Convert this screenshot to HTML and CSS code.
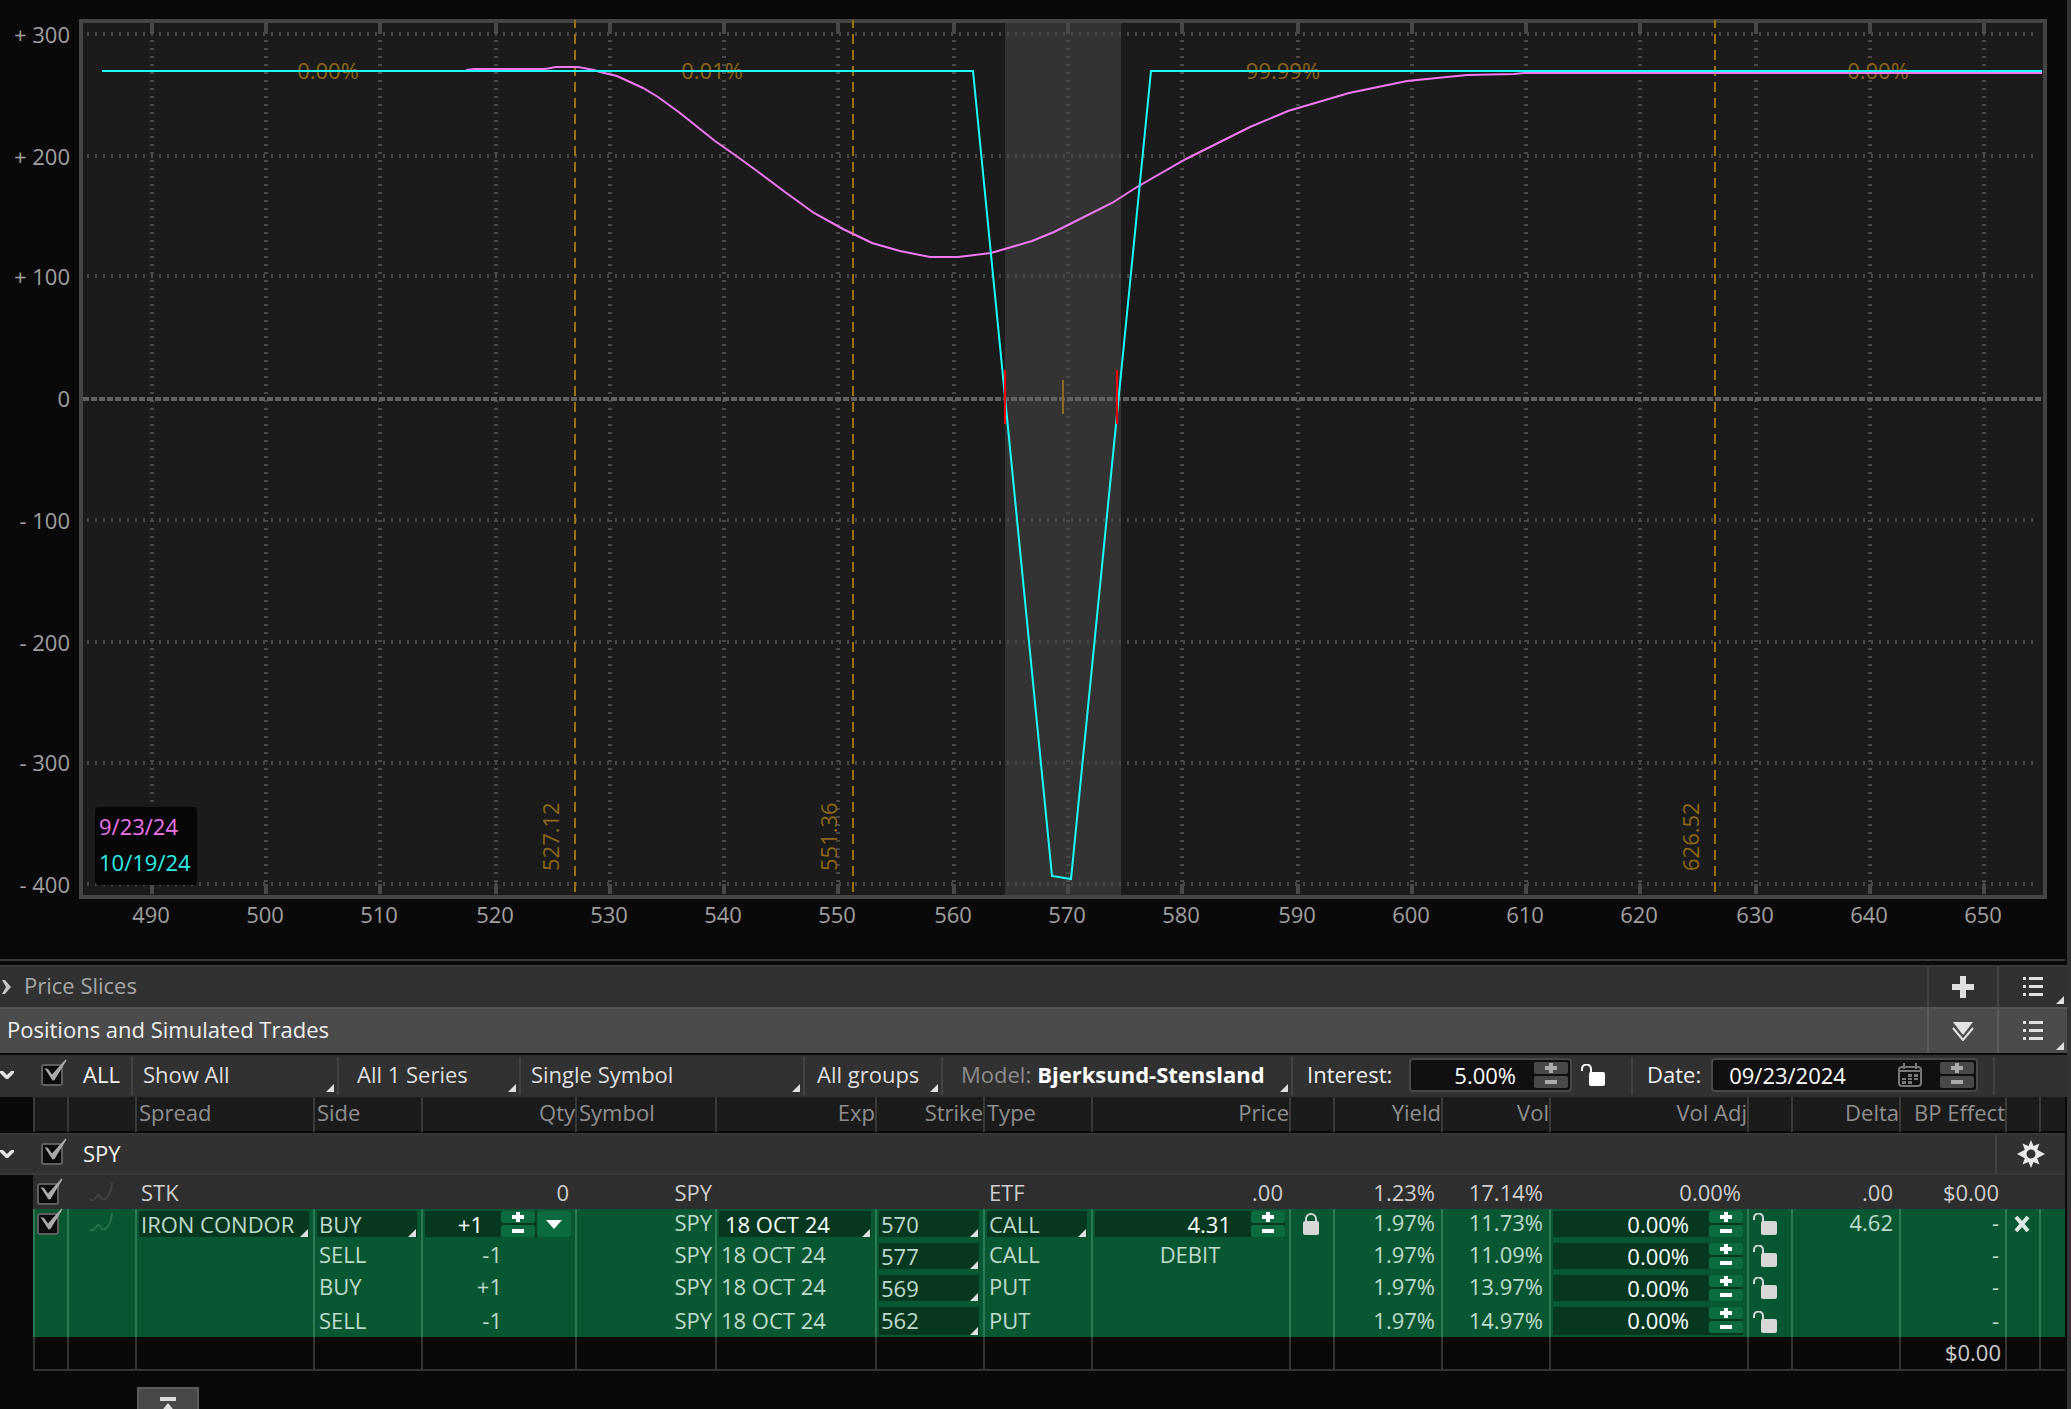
FILE: index.html
```html
<!DOCTYPE html>
<html lang="en">
<head>
    <meta charset="UTF-8">
    <meta name="viewport" content="width=device-width, initial-scale=1.0">
    <title>Risk Profile - SPY</title>
    <link rel="stylesheet" href="styles.css">
</head>
<body>
    <!-- icons -->
    <svg class="sprite" aria-hidden="true">
        <symbol id="i-check" viewBox="0 0 26 28"><path d="M3.500 10 L7 11 L11 16.500 L24.500 1.500 L25.500 2.500 L13.500 22 L11.500 22.500 Z" fill="#aaa"/></symbol>
        <symbol id="i-curve" viewBox="0 0 24 20"><path d="M1 17 C4 20 6 17 8 14 C10 11 11 15 13 17 C16 19 22 14 23 1" fill="none" stroke="currentColor" stroke-width="2"/></symbol>
        <symbol id="i-down" viewBox="0 0 14 10"><path d="M0 1 L3 1 L7 5 L11 1 L14 1 L14 3 L8 9 L6 9 L0 3 Z" fill="#e4e4e4"/></symbol>
        <symbol id="i-right" viewBox="0 0 12 16"><path d="M2 1 L5 1 L11 8 L5 15 L2 15 L6 8 Z" fill="#c4c4c4"/></symbol>
        <symbol id="i-plus" viewBox="0 0 22 22"><path d="M8 0h6v8h8v6h-8v8h-6v-8h-8v-6h8z" fill="#e0e0e0"/></symbol>
        <symbol id="i-list" viewBox="0 0 20 20"><path d="M0 0h3v3h-3z M6 0h14v3h-14z M0 8h3v3h-3z M6 8h14v3h-14z M0 16h3v3h-3z M6 16h14v3h-14z" fill="#e0e0e0"/></symbol>
        <symbol id="i-double" viewBox="0 0 22 20"><path d="M1 1h20l-10 13z" fill="#e4e4e4"/><path d="M1 7l10 12 10-12" fill="none" stroke="#e4e4e4" stroke-width="2"/></symbol>
        <symbol id="i-gear" viewBox="0 0 28 28"><path d="M14 0l2.500 6 6-2.500-2.300 6.200L28 14l-7.800 4.300L22.500 24.500l-6-2.500L14 28l-2.500-6-6 2.500 2.300-6.200L0 14l7.800-4.300L5.500 3.500l6 2.500zM14 9.500a4.500 4.500 0 1 0 0 9a4.500 4.500 0 1 0 0-9z" fill="#e8e8e8" fill-rule="evenodd"/></symbol>
        <symbol id="i-lock" viewBox="0 0 16 22"><rect x="0" y="8" width="16" height="14" rx="2" fill="currentColor"/><path d="M3 9V6a5 5 0 0 1 10 0V9" fill="none" stroke="currentColor" stroke-width="2"/></symbol>
        <symbol id="i-unlock" viewBox="0 0 24 22"><rect x="8" y="8" width="16" height="14" rx="2" fill="currentColor"/><path d="M1 7V5a4 4 0 0 1 9 0V9" fill="none" stroke="currentColor" stroke-width="2"/></symbol>
        <symbol id="i-close" viewBox="0 0 16 16"><path d="M2 1l12 14M14 1L2 15" stroke="#e0e8e4" stroke-width="4"/></symbol>
        <symbol id="i-cal" viewBox="0 0 24 24"><rect x="1" y="4" width="22" height="19" rx="3" fill="none" stroke="#777" stroke-width="2"/><path d="M2 8h20M6 0v6M18 0v6" stroke="#777" stroke-width="2"/><path d="M10 11h4v3h-4zM16 11h4v3h-4zM4 15h4v2h-4zM10 15h4v2h-4zM16 15h4v2h-4zM4 18h4v3h-4zM10 18h4v3h-4z" fill="#777"/></symbol>
    </svg>

    <main class="app">
        <svg class="chart" viewBox="0 0 2067 959" role="img" aria-label="Profit and loss by price">
            <rect class="plot" x="81" y="21" width="1963" height="875"/>
            <rect class="range" x="1005" y="19" width="116" height="880"/>

            <g class="grid-h">
                <path d="M87 34H2038M87 156H2038M87 276H2038M87 520H2038M87 642H2038M87 763H2038M87 884H2038"/>
            </g>
            <g class="grid-v">
                <path d="M152 40V884M266 40V884M380 40V884M496 40V884M610 40V884M724 40V884M838 40V884M954 40V884M1068 40V884M1182 40V884M1298 40V884M1412 40V884M1526 40V884M1640 40V884M1756 40V884M1870 40V884M1984 40V884"/>
            </g>
            <path class="zero" d="M83 399H2042"/>
            <path class="ticks" d="M152 23V34M266 23V34M380 23V34M496 23V34M610 23V34M724 23V34M838 23V34M954 23V34M1068 23V34M1182 23V34M1298 23V34M1412 23V34M1526 23V34M1640 23V34M1756 23V34M1870 23V34M1984 23V34M152 884V894M266 884V894M380 884V894M496 884V894M610 884V894M724 884V894M838 884V894M954 884V894M1068 884V894M1182 884V894M1298 884V894M1412 884V894M1526 884V894M1640 884V894M1756 884V894M1870 884V894M1984 884V894"/>
            <rect class="frame" x="81" y="21" width="1964" height="876"/>

            <!-- price slices -->
            <path class="slice" d="M575 20V898M853 20V898M1715 20V898"/>
            <g class="slice-text">
                <text x="328" y="79" text-anchor="middle">0.00%</text>
                <text x="712" y="79" text-anchor="middle">0.01%</text>
                <text x="1283" y="79" text-anchor="middle">99.99%</text>
                <text x="1878" y="79" text-anchor="middle">0.00%</text>
                <text transform="translate(559 871) rotate(-90)">527.12</text>
                <text transform="translate(837 871) rotate(-90)">551.36</text>
                <text transform="translate(1699 871) rotate(-90)">626.52</text>
            </g>

            <!-- P/L today and at expiration -->
            <polyline class="today" points="466,70 475,69 545,69 556,67 578,67 594,70 600,72 617,76 643,88 658,97 680,113 700,129 715,141 735,155 757,171 785,192 814,213 843,229 872,243 900,251 930,257 958,257 991,253 1032,241 1054,232 1068,225 1112,203 1137,187 1186,159 1250,127 1288,111 1349,93 1407,81 1467,75 1514,74 1524,73 2042,73"/>
            <polyline class="expiration" points="102,71 973,71 1052,876 1071,879 1151,71 2042,71"/>
            <path class="breakeven" d="M1005 370V424M1117 370V424"/>
            <path class="current" d="M1063 380V414"/>

            <g class="axis axis-y">
                <text x="70" y="43">+ 300</text>
                <text x="70" y="165">+ 200</text>
                <text x="70" y="285">+ 100</text>
                <text x="70" y="407">0</text>
                <text x="70" y="529">- 100</text>
                <text x="70" y="651">- 200</text>
                <text x="70" y="771">- 300</text>
                <text x="70" y="893">- 400</text>
            </g>
            <g class="axis axis-x">
                <text x="151" y="923">490</text>
                <text x="265" y="923">500</text>
                <text x="379" y="923">510</text>
                <text x="495" y="923">520</text>
                <text x="609" y="923">530</text>
                <text x="723" y="923">540</text>
                <text x="837" y="923">550</text>
                <text x="953" y="923">560</text>
                <text x="1067" y="923">570</text>
                <text x="1181" y="923">580</text>
                <text x="1297" y="923">590</text>
                <text x="1411" y="923">600</text>
                <text x="1525" y="923">610</text>
                <text x="1639" y="923">620</text>
                <text x="1755" y="923">630</text>
                <text x="1869" y="923">640</text>
                <text x="1983" y="923">650</text>
            </g>

            <rect class="legend-box" x="95" y="807" width="102" height="78" rx="4"/>
            <text class="legend-today" x="99" y="835">9/23/24</text>
            <text class="legend-exp" x="99" y="871">10/19/24</text>
        </svg>

        <hr class="splitter">

        <section class="bar">
            <button class="toggle" aria-label="Expand"><svg width="12" height="16"><use href="#i-right"/></svg></button>
            <h2 class="bar-title">Price Slices</h2>
            <button class="bar-btn" aria-label="Add slice"><svg width="22" height="22"><use href="#i-plus"/></svg></button>
            <button class="bar-btn corner" aria-label="Menu"><svg width="20" height="20"><use href="#i-list"/></svg></button>
        </section>

        <section class="bar bar-active">
            <h2 class="bar-title">Positions and Simulated Trades</h2>
            <button class="bar-btn" aria-label="Collapse"><svg width="22" height="20"><use href="#i-double"/></svg></button>
            <button class="bar-btn corner" aria-label="Menu"><svg width="20" height="20"><use href="#i-list"/></svg></button>
        </section>

        <div class="toolbar">
            <div class="tool tool-all">
                <button class="toggle" aria-label="Collapse all"><svg width="14" height="10"><use href="#i-down"/></svg></button>
                <label class="check"><input type="checkbox" checked><svg><use href="#i-check"/></svg><span>ALL</span></label>
            </div>
            <div class="tool tool-show corner"><select aria-label="Show"><option>Show All</option></select></div>
            <div class="tool tool-series corner"><select aria-label="Series"><option>All 1 Series</option></select></div>
            <div class="tool tool-symbol corner"><select aria-label="Symbol"><option>Single Symbol</option></select></div>
            <div class="tool tool-groups corner"><select aria-label="Groups"><option>All groups</option></select></div>
            <div class="tool tool-model corner">
                <label for="model">Model:</label>
                <select id="model"><option>Bjerksund-Stensland</option></select>
            </div>
            <div class="tool tool-interest">
                <label for="interest">Interest:</label>
                <div class="field">
                    <input id="interest" type="text" value="5.00%">
                    <div class="spin"><button aria-label="Increase"></button><button class="minus" aria-label="Decrease"></button></div>
                </div>
                <button class="icon-btn" aria-label="Unlocked"><svg width="24" height="22"><use href="#i-unlock"/></svg></button>
            </div>
            <div class="tool tool-date">
                <label for="date">Date:</label>
                <div class="field">
                    <input id="date" type="text" value="09/23/2024">
                    <button class="icon-btn" aria-label="Calendar"><svg width="24" height="24"><use href="#i-cal"/></svg></button>
                    <div class="spin"><button aria-label="Next day"></button><button class="minus" aria-label="Previous day"></button></div>
                </div>
            </div>
            <div class="tool tool-rest"></div>
        </div>

        <table class="positions">
            <colgroup>
                <col class="w-edge"><col class="w-box"><col class="w-icon"><col class="w-spread"><col class="w-std"><col class="w-qty"><col class="w-symbol"><col class="w-exp"><col class="w-std"><col class="w-std"><col class="w-wide"><col class="w-lock"><col class="w-std"><col class="w-std"><col class="w-wide"><col class="w-lock"><col class="w-std"><col class="w-bp"><col class="w-box"><col class="w-end">
            </colgroup>
            <thead>
                <tr>
                    <td class="edge"></td><td></td><td></td>
                    <th>Spread</th><th>Side</th><th class="num">Qty</th><th>Symbol</th><th class="num">Exp</th><th class="num">Strike</th><th>Type</th><th class="num">Price</th><td></td>
                    <th class="num">Yield</th><th class="num">Vol</th><th class="num">Vol Adj</th><td></td><th class="num">Delta</th><th class="num">BP Effect</th><td></td><td></td>
                </tr>
            </thead>
            <tbody>
                <tr class="group">
                    <td colspan="20">
                        <div class="group-row">
                            <button class="toggle" aria-label="Collapse SPY"><svg width="14" height="10"><use href="#i-down"/></svg></button>
                            <label class="check"><input type="checkbox" checked><svg><use href="#i-check"/></svg><span>SPY</span></label>
                            <button class="gear" aria-label="Settings"><svg width="28" height="28"><use href="#i-gear"/></svg></button>
                        </div>
                    </td>
                </tr>
                <tr class="stock">
                    <td class="edge"></td>
                    <td class="tick"><label class="check"><input type="checkbox" checked aria-label="STK"><svg><use href="#i-check"/></svg></label></td>
                    <td class="mid"><svg class="curve" width="24" height="20"><use href="#i-curve"/></svg></td>
                    <td>STK</td><td></td><td class="num">0</td><td class="num sym">SPY</td><td></td><td></td><td>ETF</td><td class="num">.00</td><td></td>
                    <td class="num">1.23%</td><td class="num">17.14%</td><td class="num">0.00%</td><td></td><td class="num">.00</td><td class="num">$0.00</td><td></td><td></td>
                </tr>
                <tr class="leg">
                    <td class="edge"></td>
                    <td class="tick"><label class="check"><input type="checkbox" checked aria-label="Iron condor"><svg><use href="#i-check"/></svg></label></td>
                    <td class="mid"><svg class="curve" width="24" height="20"><use href="#i-curve"/></svg></td>
                    <td class="ctl"><div class="box corner"><select aria-label="Spread"><option>IRON CONDOR</option></select></div></td>
                    <td class="ctl"><div class="box corner"><select aria-label="Side"><option>BUY</option></select></div></td>
                    <td class="ctl">
                        <div class="box box-qty">
                            <input type="text" value="+1" aria-label="Quantity">
                            <div class="spin"><button aria-label="Increase"></button><button class="minus" aria-label="Decrease"></button></div>
                            <button class="drop" aria-label="Quantity presets"></button>
                        </div>
                    </td>
                    <td class="num sym">SPY</td>
                    <td class="ctl"><div class="box box-exp corner"><select aria-label="Expiration"><option>18 OCT 24</option></select></div></td>
                    <td class="ctl"><div class="box corner"><select aria-label="Strike"><option>570</option></select></div></td>
                    <td class="ctl"><div class="box corner"><select aria-label="Type"><option>CALL</option></select></div></td>
                    <td class="ctl">
                        <div class="box">
                            <input type="text" value="4.31" aria-label="Price">
                            <div class="spin"><button aria-label="Increase"></button><button class="minus" aria-label="Decrease"></button></div>
                        </div>
                    </td>
                    <td class="mid"><button class="icon-btn" aria-label="Locked"><svg width="16" height="22"><use href="#i-lock"/></svg></button></td>
                    <td class="num">1.97%</td><td class="num">11.73%</td>
                    <td class="ctl">
                        <div class="box">
                            <input type="text" value="0.00%" aria-label="Vol adjustment">
                            <div class="spin"><button aria-label="Increase"></button><button class="minus" aria-label="Decrease"></button></div>
                        </div>
                    </td>
                    <td><button class="icon-btn" aria-label="Unlocked"><svg width="24" height="22"><use href="#i-unlock"/></svg></button></td>
                    <td class="num">4.62</td><td class="num">-</td>
                    <td class="mid"><button class="icon-btn" aria-label="Remove"><svg width="16" height="16"><use href="#i-close"/></svg></button></td>
                    <td></td>
                </tr>
                <tr class="leg">
                    <td class="edge"></td><td></td><td></td><td></td>
                    <td>SELL</td><td class="num qty">-1</td><td class="num sym">SPY</td><td>18 OCT 24</td>
                    <td class="ctl"><div class="box corner"><select aria-label="Strike"><option>577</option></select></div></td>
                    <td>CALL</td><td class="mid">DEBIT</td><td></td>
                    <td class="num">1.97%</td><td class="num">11.09%</td>
                    <td class="ctl">
                        <div class="box">
                            <input type="text" value="0.00%" aria-label="Vol adjustment">
                            <div class="spin"><button aria-label="Increase"></button><button class="minus" aria-label="Decrease"></button></div>
                        </div>
                    </td>
                    <td><button class="icon-btn" aria-label="Unlocked"><svg width="24" height="22"><use href="#i-unlock"/></svg></button></td>
                    <td></td><td class="num">-</td><td></td><td></td>
                </tr>
                <tr class="leg">
                    <td class="edge"></td><td></td><td></td><td></td>
                    <td>BUY</td><td class="num qty">+1</td><td class="num sym">SPY</td><td>18 OCT 24</td>
                    <td class="ctl"><div class="box corner"><select aria-label="Strike"><option>569</option></select></div></td>
                    <td>PUT</td><td></td><td></td>
                    <td class="num">1.97%</td><td class="num">13.97%</td>
                    <td class="ctl">
                        <div class="box">
                            <input type="text" value="0.00%" aria-label="Vol adjustment">
                            <div class="spin"><button aria-label="Increase"></button><button class="minus" aria-label="Decrease"></button></div>
                        </div>
                    </td>
                    <td><button class="icon-btn" aria-label="Unlocked"><svg width="24" height="22"><use href="#i-unlock"/></svg></button></td>
                    <td></td><td class="num">-</td><td></td><td></td>
                </tr>
                <tr class="leg leg-last">
                    <td class="edge"></td><td></td><td></td><td></td>
                    <td>SELL</td><td class="num qty">-1</td><td class="num sym">SPY</td><td>18 OCT 24</td>
                    <td class="ctl"><div class="box corner"><select aria-label="Strike"><option>562</option></select></div></td>
                    <td>PUT</td><td></td><td></td>
                    <td class="num">1.97%</td><td class="num">14.97%</td>
                    <td class="ctl">
                        <div class="box">
                            <input type="text" value="0.00%" aria-label="Vol adjustment">
                            <div class="spin"><button aria-label="Increase"></button><button class="minus" aria-label="Decrease"></button></div>
                        </div>
                    </td>
                    <td><button class="icon-btn" aria-label="Unlocked"><svg width="24" height="22"><use href="#i-unlock"/></svg></button></td>
                    <td></td><td class="num">-</td><td></td><td></td>
                </tr>
            </tbody>
            <tfoot>
                <tr>
                    <td class="edge"></td><td></td><td></td><td></td><td></td><td></td><td></td><td></td><td></td><td></td><td></td><td></td><td></td><td></td><td></td><td></td><td></td><td class="num">$0.00</td><td></td><td></td>
                </tr>
            </tfoot>
        </table>

        <button class="pull-up" aria-label="Show panel">
            <svg width="16" height="16" viewBox="0 0 16 16"><path d="M0 0h16v4h-16zM8 6l8 10h-16z" fill="#ddd"/></svg>
        </button>
    </main>
</body>
</html>
```
FILE: styles.css
```css
* {
    box-sizing: border-box;
}
body {
    margin: 0;
    background: #090909;
    color: #cdcdcd;
    font-family: "Open Sans", "Noto Sans", sans-serif;
    font-size: 22px;
    line-height: 30px;
}
button, select, input {
    font: inherit;
    color: inherit;
    border: 0;
    padding: 0;
    margin: 0;
    background: none;
    border-radius: 0;
}
select, input {
    appearance: none;
    min-width: 0;
    outline: none;
}
svg {
    display: block;
}
.sprite {
    position: absolute;
    width: 0;
    height: 0;
}
.app {
    height: 100vh;
    overflow: hidden;
    border-right: 4px solid #333;
}

/* chart */
.chart {
    width: 100%;
    height: auto;
}
.plot {
    fill: #1b1b1b;
}
.range {
    fill: #333;
}
.frame {
    fill: none;
    stroke: #444;
    stroke-width: 4;
}
.grid-h path {
    stroke: #484848;
    stroke-width: 4;
    stroke-dasharray: 2 6;
}
.grid-v path {
    stroke: #484848;
    stroke-width: 4;
    stroke-dasharray: 2 6;
}
.zero {
    stroke: #606060;
    stroke-width: 4;
    stroke-dasharray: 6 2;
}
.ticks {
    stroke: #484848;
    stroke-width: 4;
}
.slice {
    stroke: #9a7008;
    stroke-width: 2;
    stroke-dasharray: 10 6;
    stroke-dashoffset: 2;
}
.slice-text {
    fill: #8c6717;
}
.today {
    fill: none;
    stroke: #f279f2;
    stroke-width: 2;
}
.expiration {
    fill: none;
    stroke: #1cfafa;
    stroke-width: 2;
}
.breakeven {
    stroke: #f00505;
    stroke-width: 2;
}
.current {
    stroke: #8a6820;
    stroke-width: 2;
}
.axis {
    fill: #a0a0a0;
}
.axis-y {
    text-anchor: end;
}
.axis-x {
    text-anchor: middle;
}
.legend-box {
    fill: #060606;
}
.legend-today {
    fill: #ee74ee;
}
.legend-exp {
    fill: #2ceee8;
}
.splitter {
    height: 2px;
    margin: 0 2px 4px 0;
    border: 0;
    background: #3a3a3a;
}

/* section bars */
.bar {
    display: flex;
    align-items: center;
    height: 42px;
    background: #313131;
    border-top: 2px solid #383838;
    color: #a6a6a6;
}
.bar-active {
    height: 46px;
    background: #4b4b4b;
    border-color: #555;
    color: #f0f0f0;
    margin-bottom: 2px;
}
.bar-title {
    flex: 1;
    margin: 0;
    padding-bottom: 5px;
    font-size: 22px;
    font-weight: 400;
}
.bar-active .bar-title {
    padding-left: 7px;
}
.bar-btn {
    display: flex;
    align-items: center;
    justify-content: center;
    width: 70px;
    height: 100%;
    border-left: 2px solid #444;
}
.bar-active .bar-btn {
    border-color: #5c5c5c;
}
.toggle {
    display: flex;
    width: 24px;
    flex: none;
}

/* small triangle that marks a drop-down */
.corner {
    position: relative;
}
.corner::after {
    content: "";
    position: absolute;
    right: 3px;
    bottom: 3px;
    border-left: 8px solid transparent;
    border-bottom: 8px solid #e0e0e0;
    pointer-events: none;
}

/* toolbar */
.toolbar {
    display: flex;
    height: 42px;
    padding: 2px 0;
    background: #313131;
    color: #dedede;
}
.tool {
    display: flex;
    align-items: center;
    flex: none;
    padding-bottom: 2px;
    border-left: 2px solid #424242;
}
.tool select {
    flex: 1;
    padding-bottom: 2px;
}
.tool > label {
    padding-bottom: 2px;
    color: #eee;
}
.tool-all {
    width: 131px;
    border-left: 0;
}
.tool-show {
    width: 206px;
    padding-left: 10px;
}
.tool-series {
    width: 182px;
    padding-left: 18px;
}
.tool-symbol {
    width: 284px;
    padding-left: 10px;
}
.tool-groups {
    width: 138px;
    padding-left: 12px;
}
.tool-model {
    width: 350px;
    padding-left: 18px;
    gap: 6px;
}
.tool-model > label {
    color: #8c8c8c;
}
.tool-model select {
    font-weight: 700;
    color: #fff;
}
.tool-interest {
    width: 340px;
    padding-left: 14px;
}
.tool-date {
    width: 362px;
    padding-left: 14px;
}
.tool-rest {
    flex: 1;
}
.field {
    display: flex;
    align-items: center;
    height: 34px;
    margin-left: 10px;
    padding-right: 2px;
    border: 2px solid #484848;
    border-radius: 4px;
    background: #101010;
    color: #fff;
}
.tool-interest .field {
    width: 163px;
    margin-left: auto;
}
.tool-interest .icon-btn {
    margin: 0 26px 0 9px;
    color: #fff;
}
.tool-interest input {
    flex: 1;
    padding-right: 18px;
    text-align: right;
}
.tool-date .field {
    width: 267px;
}
.tool-date input {
    flex: 1;
    padding-left: 16px;
}
.field .icon-btn {
    margin-right: 18px;
}

/* plus and minus stepper */
.spin {
    display: flex;
    flex-direction: column;
    flex: none;
    gap: 2px;
    width: 34px;
    height: 26px;
}
.spin button {
    flex: 1;
    border-radius: 2px;
    background:
        linear-gradient(#aaa, #aaa) center / 12px 4px no-repeat,
        linear-gradient(#aaa, #aaa) center / 4px 10px no-repeat,
        #484848;
}
.spin .minus {
    background:
        linear-gradient(#aaa, #aaa) center / 12px 4px no-repeat,
        #484848;
}

/* checkbox with an oversized tick */
.check {
    position: relative;
    display: flex;
    align-items: center;
    gap: 20px;
    height: 22px;
}
.check input {
    width: 22px;
    height: 22px;
    border: 2px solid #5e5e5e;
    border-radius: 3px;
    background: #0b0b0b;
}
.check svg {
    position: absolute;
    left: 0;
    bottom: 0;
    width: 26px;
    height: 28px;
}
.check span {
    padding-bottom: 2px;
}
.tool-all .check,
.group-row .check {
    margin-left: 17px;
    padding: 0;
    color: #f2f2f2;
}
.tick .check {
    margin: 4px 0 0;
}

/* positions table */
.positions {
    width: calc(100% - 2px);
    table-layout: fixed;
    border-collapse: separate;
    border-spacing: 0;
}
.w-edge { width: 33px; }
.w-box { width: 34px; }
.w-icon { width: 68px; }
.w-spread { width: 178px; }
.w-std { width: 108px; }
.w-qty { width: 154px; }
.w-symbol { width: 140px; }
.w-exp { width: 160px; }
.w-wide { width: 198px; }
.w-lock { width: 44px; }
.w-bp { width: 106px; }
.w-end { width: 26px; }

.positions td,
.positions th {
    height: 32px;
    padding: 0 4px;
    border-left: 2px solid #3a3a3a;
    font-weight: 400;
    text-align: left;
    white-space: nowrap;
    line-height: 28px;
}
.positions .edge {
    border: 0;
    background: #090909;
}
.positions .num {
    text-align: right;
}
.positions .mid {
    text-align: center;
}
.positions .mid svg {
    margin: 0 auto;
}
.positions thead td,
.positions thead th {
    height: 36px;
    padding: 0 2px 4px;
    background: #1b1b1b;
    border-bottom: 2px solid #090909;
    color: #8e8e8e;
}
.positions thead .num {
    padding-right: 0;
}
.positions thead .edge {
    background: #090909;
}
.positions .group td {
    height: 42px;
    padding: 0;
    border-left: 0;
    background: #313131;
}
.group-row {
    display: flex;
    align-items: center;
    height: 42px;
    border-top: 2px solid #363636;
    border-bottom: 2px solid #383838;
}
.gear {
    display: flex;
    align-items: center;
    justify-content: center;
    width: 70px;
    height: 38px;
    margin-left: auto;
    border-left: 2px solid #424242;
}
.positions .stock td {
    height: 34px;
    padding: 0 6px 0 4px;
    border-color: #2e2e2e;
    background: #2e2e2e;
}
.positions .stock .edge {
    background: #090909;
}
.curve {
    color: #424242;
}
.positions .leg td {
    padding: 0 6px 6px 4px;
    border-color: #2b7a53;
    background: #085733;
    color: #c2dacb;
    line-height: 26px;
}
.positions .leg .edge {
    background: #090909;
}
.leg .curve {
    color: #26704b;
}
.positions .leg .ctl {
    padding: 2px 4px 4px 2px;
}
.positions .leg .qty {
    padding-right: 73px;
}
.positions .leg .sym,
.positions .stock .sym {
    padding-right: 3px;
}
.positions .leg .tick,
.positions .stock .tick {
    padding-left: 2px;
    padding-right: 0;
}
.positions .leg-last td {
    padding-top: 2px;
    padding-bottom: 4px;
}
.positions .leg-last .ctl {
    padding-bottom: 2px;
}
.box {
    display: flex;
    height: 26px;
    background: #063820;
}
.box select {
    width: 100%;
    height: 100%;
    padding: 0 0 4px 2px;
}
.box.corner::after {
    right: 1px;
    bottom: 0;
}
.box-exp select {
    padding-left: 6px;
    color: #fff;
}
.box input {
    flex: 1;
    padding: 0 20px 0 0;
    text-align: right;
    color: #fff;
}
.box-qty input {
    padding-right: 18px;
}
.leg-last .box {
    height: 28px;
}
.leg-last .box select,
.leg-last .box input {
    padding-bottom: 2px;
}
.box .spin button {
    background:
        linear-gradient(#fff, #fff) center / 12px 4px no-repeat,
        linear-gradient(#fff, #fff) center / 4px 10px no-repeat,
        #0b6b3f;
}
.box .spin .minus {
    background:
        linear-gradient(#fff, #fff) center / 12px 4px no-repeat,
        #0b6b3f;
}
.drop {
    display: flex;
    align-items: center;
    justify-content: center;
    flex: none;
    width: 34px;
    margin-left: 2px;
    border-radius: 2px;
    background: #0b6b3f;
}
.drop::before {
    content: "";
    border: 8px solid transparent;
    border-top: 9px solid #fff;
    border-bottom: 0;
}
.icon-btn {
    display: block;
    color: #d8d8d8;
}
.leg .icon-btn {
    margin-top: 4px;
}
.leg .mid .icon-btn {
    margin: 4px auto 0;
}
.positions tfoot td {
    height: 34px;
    padding-bottom: 2px;
    border-color: #333;
    border-bottom: 2px solid #333;
}
.positions tfoot .edge {
    border: 0;
}
.pull-up {
    display: flex;
    justify-content: center;
    width: 62px;
    height: 36px;
    margin: 16px 0 0 137px;
    padding-top: 8px;
    border: 2px solid #5c5c5c;
    background: #484848;
}
```
